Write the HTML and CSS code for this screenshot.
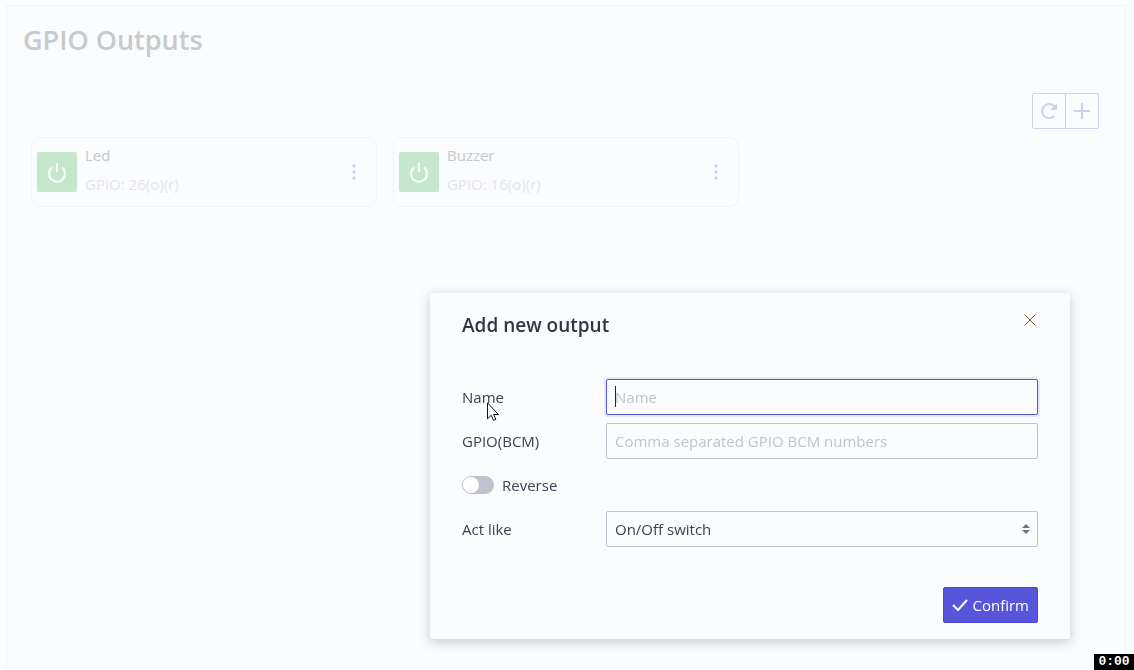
FILE: index.html
```html
<!DOCTYPE html>
<html lang="en">
<head>
<meta charset="utf-8">
<meta name="viewport" content="width=device-width, initial-scale=1">
<title>GPIO Outputs</title>
<link rel="stylesheet" href="styles.css">
</head>
<body>
<main class="panel">
  <h1 class="panel-title">GPIO Outputs</h1>
  <div class="toolbar">
    <button class="tool" type="button" aria-label="Refresh">
      <svg width="18" height="18" viewBox="0 0 18 18" fill="none"><path d="M14.2 14A7 7 0 1 1 14 4" stroke="currentColor" stroke-width="2"/><path d="M17 1v7h-7z" fill="currentColor"/></svg>
    </button>
    <button class="tool" type="button" aria-label="Add">
      <svg width="18" height="18" viewBox="0 0 18 18" fill="none" stroke="currentColor" stroke-width="2"><path d="M9 1v16M1 9h16"/></svg>
    </button>
  </div>
  <div class="cards">
    <article class="card">
      <button class="power" type="button" aria-label="Toggle Led">
        <svg width="20" height="22" viewBox="0 0 20 22" fill="none" stroke="currentColor" stroke-width="2"><path d="M10 2v9M5 6.5a8 8 0 1 0 10 0"/></svg>
      </button>
      <div class="card-text"><div class="card-name">Led</div><div class="card-pins">GPIO: 26(o)(r)</div></div>
      <button class="more" type="button" aria-label="Led options">
        <svg width="4" height="16" viewBox="0 0 4 16" fill="currentColor"><circle cx="2" cy="2" r="1.7"/><circle cx="2" cy="8" r="1.7"/><circle cx="2" cy="14" r="1.7"/></svg>
      </button>
    </article>
    <article class="card">
      <button class="power" type="button" aria-label="Toggle Buzzer">
        <svg width="20" height="22" viewBox="0 0 20 22" fill="none" stroke="currentColor" stroke-width="2"><path d="M10 2v9M5 6.5a8 8 0 1 0 10 0"/></svg>
      </button>
      <div class="card-text"><div class="card-name">Buzzer</div><div class="card-pins">GPIO: 16(o)(r)</div></div>
      <button class="more" type="button" aria-label="Buzzer options">
        <svg width="4" height="16" viewBox="0 0 4 16" fill="currentColor"><circle cx="2" cy="2" r="1.7"/><circle cx="2" cy="8" r="1.7"/><circle cx="2" cy="14" r="1.7"/></svg>
      </button>
    </article>
  </div>
</main>

<form class="modal" role="dialog" aria-labelledby="modal-title">
  <header class="modal-header">
    <h2 class="modal-title" id="modal-title">Add new output</h2>
    <button class="close" type="button" aria-label="Close">
      <svg width="12" height="12" viewBox="0 0 12 12" fill="none" stroke="currentColor"><path d="M.5.5l11 11M11.5.5l-11 11"/></svg>
    </button>
  </header>
  <div class="fields">
    <div class="row">
      <label class="label" for="name">Name</label>
      <div class="control">
        <input class="input input-active" id="name" type="text" placeholder="Name">
        <span class="caret"></span>
      </div>
    </div>
    <div class="row">
      <label class="label" for="gpio">GPIO(BCM)</label>
      <div class="control"><input class="input" id="gpio" type="text" placeholder="Comma separated GPIO BCM numbers"></div>
    </div>
    <div class="row">
      <label class="switch"><input class="switch-input" type="checkbox">Reverse</label>
    </div>
    <div class="row">
      <label class="label" for="act">Act like</label>
      <div class="control">
        <select class="input select" id="act"><option>On/Off switch</option></select>
        <svg class="select-arrows" width="8" height="10" viewBox="0 0 8 10" fill="currentColor"><path d="M4 0l4 4H0zM0 6h8l-4 4z"/></svg>
      </div>
    </div>
  </div>
  <footer class="modal-footer">
    <button class="confirm" type="button">
      <svg width="16" height="12" viewBox="0 0 16 12" fill="none" stroke="currentColor" stroke-width="2"><path d="M1 6l5 5L15 1"/></svg>
      <span>Confirm</span>
    </button>
  </footer>
</form>

<svg class="pointer" width="12" height="19" viewBox="0 0 12 19" fill="#fff" stroke="#111"><path d="M.5.8v16l3.7-3.5 2.4 5 2.3-1-2.3-4.8h4.8z"/></svg>
<time class="timer">0:00</time>
</body>
</html>
```
FILE: styles.css
```css
* { box-sizing: border-box; }

body {
  margin: 0;
  background: #fafcfe;
  color: #3b4351;
  font: 400 15px/24px "Open Sans", "Noto Sans", sans-serif;
}

button {
  display: flex;
  align-items: center;
  justify-content: center;
  padding: 0;
  border: 0;
  background: none;
  font: inherit;
}

.panel {
  min-height: calc(100vh - 5px);
  margin: 5px 8px 0 6px;
  padding: 16px 24px;
  border: 1px solid #f2f3f6;
  border-bottom: 0;
}

.panel-title {
  margin: 0 0 35px -8px;
  color: #c9cacd;
  font-size: 27px;
  font-weight: 600;
  line-height: 36px;
}

.toolbar {
  display: flex;
  justify-content: flex-end;
  padding-right: 2px;
  margin-bottom: 8px;
  color: #d0cff2;
}

.tool {
  width: 34px;
  height: 36px;
  border: 1px solid #d0cff2;
  border-radius: 2px 0 0 2px;
  color: inherit;
}

.tool + .tool {
  margin-left: -1px;
  border-radius: 0 2px 2px 0;
}

.cards {
  display: grid;
  grid-template-columns: repeat(3, 1fr);
  gap: 16px;
}

.card {
  display: flex;
  align-items: center;
  gap: 8px;
  height: 70px;
  padding: 0 16px 0 5px;
  border: 1px solid #f2f3f6;
  border-radius: 10px;
}

.power {
  width: 40px;
  height: 40px;
  border-radius: 2px;
  background: #c5e8cc;
  color: #fff;
}

.card-text {
  flex: 1;
  padding-bottom: 6px;
}

.card-name {
  margin-bottom: 5px;
  color: #c5c8ce;
}

.card-pins { color: #e4e5e9; }

.more {
  width: 12px;
  height: 36px;
  color: #d0cff2;
}

.modal {
  position: fixed;
  top: 293px;
  right: 64px;
  width: 640px;
  padding: 16px 32px;
  border-radius: 2px;
  background: #fafcfe;
  box-shadow: 0 3px 12px rgba(48, 55, 66, 0.26);
}

.modal-header {
  display: flex;
  justify-content: space-between;
  align-items: flex-start;
  margin-bottom: 38px;
}

.modal-title {
  margin: 0;
  color: #303742;
  font-size: 19px;
  font-weight: 600;
  line-height: 32px;
}

.close {
  width: 16px;
  height: 22px;
  color: #7b5a22;
}

.fields {
  display: grid;
  gap: 8px;
}

.row {
  display: flex;
  align-items: center;
  min-height: 36px;
}

.label { width: 144px; }

.control {
  position: relative;
  flex: 1;
}

.input {
  display: block;
  width: 100%;
  height: 36px;
  padding: 0 8px;
  border: 1px solid #bcc3ce;
  border-radius: 2px;
  outline: 0;
  background: #fafcfe;
  color: #3b4351;
  font: inherit;
}

.input::placeholder {
  color: #bfc5cf;
  opacity: 1;
}

.input-active {
  border-color: #5755d9;
  box-shadow: 0 0 0 2px #e7e7fa;
}

.caret {
  position: absolute;
  top: 7px;
  left: 9px;
  width: 1px;
  height: 21px;
  background: #222;
}

.select { appearance: none; }

.select-arrows {
  position: absolute;
  top: 13px;
  right: 8px;
  color: #66758c;
  pointer-events: none;
}

.switch {
  display: flex;
  align-items: center;
  gap: 8px;
}

.switch-input {
  appearance: none;
  width: 32px;
  height: 18px;
  margin: 0;
  border: 1px solid #bcc3ce;
  border-radius: 9px;
  background: #bcc3ce;
}

.switch-input::before {
  content: "";
  display: block;
  width: 16px;
  height: 16px;
  border-radius: 50%;
  background: #fff;
}

.switch-input:checked::before { margin-left: 14px; }

.modal-footer {
  display: flex;
  justify-content: flex-end;
  margin-top: 40px;
}

.confirm {
  gap: 4px;
  height: 36px;
  padding: 0 8px;
  border: 1px solid #4b48d6;
  border-radius: 2px;
  background: #5755d9;
  color: #fff;
}

.pointer {
  position: fixed;
  top: 402px;
  left: 487px;
}

.timer {
  position: fixed;
  right: 0;
  bottom: 0;
  width: 40px;
  background: #000;
  color: #fff;
  font: bold 13px/16px "Liberation Mono", monospace;
  text-align: center;
}
```
